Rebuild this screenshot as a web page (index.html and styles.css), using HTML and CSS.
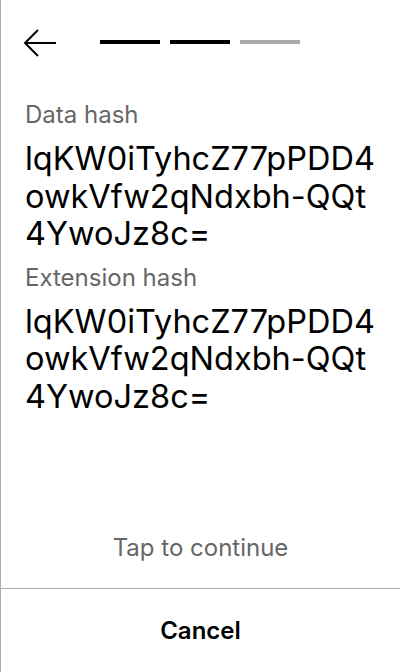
FILE: index.html
```html
<!DOCTYPE html>
<html lang="en">
<head>
<meta charset="utf-8">
<title>Hashes</title>
<link rel="stylesheet" href="styles.css">
</head>
<body>
<div class="screen">
  <header class="top">
    <button class="back" aria-label="Back">
      <svg width="36" height="36" viewBox="0 0 36 36"><path d="M34 18 H3 M16 5 L3 18 L16 31" fill="none" stroke="#000" stroke-width="2"/></svg>
    </button>
    <div class="steps">
      <span class="step done"></span>
      <span class="step done"></span>
      <span class="step"></span>
    </div>
  </header>
  <main class="content">
    <div class="field">
      <div class="label">Data hash</div>
      <div class="value">lqKW0iTyhcZ77pPDD4<br>owkVfw2qNdxbh-QQt<br>4YwoJz8c=</div>
    </div>
    <div class="field">
      <div class="label">Extension hash</div>
      <div class="value">lqKW0iTyhcZ77pPDD4<br>owkVfw2qNdxbh-QQt<br>4YwoJz8c=</div>
    </div>
  </main>
  <div class="tap">Tap to continue</div>
  <footer class="actions">
    <button class="cancel">Cancel</button>
  </footer>
</div>
</body>
</html>
```
FILE: styles.css
```css
html, body {
  margin: 0;
  padding: 0;
  background: #fff;
}
body {
  font-family: Inter, "Noto Sans", sans-serif;
  color: #000;
}
.screen {
  height: 672px;
  box-sizing: border-box;
  border-left: 1px solid #aaa;
  display: flex;
  flex-direction: column;
}
.top {
  height: 86px;
  box-sizing: border-box;
  display: flex;
  align-items: flex-start;
  padding: 25px 0 0 21px;
}
.back {
  border: 0;
  padding: 0;
  background: none;
  width: 36px;
  height: 36px;
  display: block;
}
.back svg { display: block; }
.steps {
  display: flex;
  gap: 10px;
  margin: 15px 0 0 42px;
}
.step {
  width: 60px;
  height: 4px;
  background: #aaa;
}
.step.done { background: #000; }
.content {
  padding: 14px 23px 0 24px;
  flex: 1;
  display: flex;
  flex-direction: column;
  gap: 10px;
}
.label {
  font-size: 24px;
  line-height: 29px;
  color: #666;
  padding-bottom: 11px;
}
.value {
  font-size: 32.5px;
  line-height: 37.5px;
  color: #000;
}
.tap {
  text-align: center;
  font-size: 24px;
  color: #666;
  line-height: 29px;
  padding-bottom: 26px;
}
.actions {
  border-top: 1px solid #aaa;
  height: 84px;
  box-sizing: border-box;
  display: flex;
}
.cancel {
  flex: 1;
  border: 0;
  padding: 0;
  background: none;
  font-family: Inter, "Noto Sans", sans-serif;
  font-size: 24px;
  font-weight: 600;
  color: #000;
}
```
